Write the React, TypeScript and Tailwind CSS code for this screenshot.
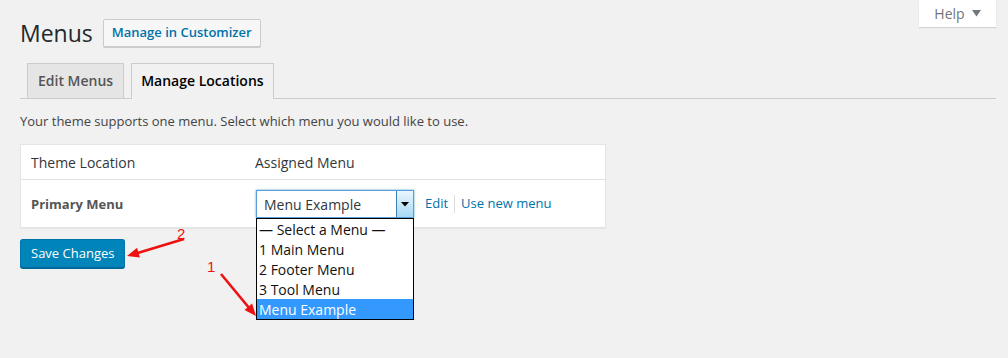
import React from "react";

const font = { fontFamily: '"Open Sans", "Noto Sans", sans-serif' };

const options = ["— Select a Menu —", "1 Main Menu", "2 Footer Menu", "3 Tool Menu", "Menu Example"];

const Annotations: React.FC = () => (
  <svg className="absolute left-0 top-0 pointer-events-none" width="1008" height="358">
    {/* arrow 2 */}
    <line x1="184" y1="239" x2="136" y2="253.5" stroke="#ee1111" strokeWidth="2.6" />
    <polygon points="127,256 137.1,247.8 139.9,257.4" fill="#ee1111" />
    <text x="177" y="239" fill="#ee1111" fontSize="15" fontFamily="Liberation Sans, sans-serif">2</text>
    {/* arrow 1 */}
    <line x1="221" y1="274" x2="250" y2="309" stroke="#ee1111" strokeWidth="2.6" />
    <polygon points="256,316 244.5,310 252.1,303.6" fill="#ee1111" />
    <text x="207" y="272" fill="#ee1111" fontSize="15" fontFamily="Liberation Sans, sans-serif">1</text>
  </svg>
);

export default function App() {
  return (
    <div className="relative w-[1008px] h-[358px] bg-[#f1f1f1] overflow-hidden text-[#444]" style={font}>
      {/* Help tab */}
      <div className="absolute right-[12px] top-0 w-[77px] h-[27px] bg-white shadow-[0_1px_1px_rgba(0,0,0,0.12)] flex items-center justify-center gap-[7px] text-[14px] text-[#72777c]">
        <span>Help</span>
        <svg width="9" height="7" viewBox="0 0 9 7">
          <polygon points="0,0 9,0 4.5,6.5" fill="#72777c" />
        </svg>
      </div>

      <div className="pl-5 pr-3 pt-[19px]">
        {/* Heading */}
        <div className="flex items-center gap-[10px]">
          <h1 className="text-[23px] leading-[28px] text-[#23282d] font-normal">Menus</h1>
          <button className="h-[28px] px-[8px] border border-[#ccc] bg-[#f7f7f7] rounded-[2px] text-[13px] font-semibold text-[#0073aa] shadow-[0_1px_0_#ccc]">
            Manage in Customizer
          </button>
        </div>

        {/* Tabs */}
        <div className="mt-[16px] flex items-end border-b border-[#ccc] pl-[7px]">
          <div className="px-[10px] py-[5px] border border-b-0 border-[#ccc] bg-[#e5e5e5] text-[14px] leading-[24px] font-semibold text-[#555]">
            Edit Menus
          </div>
          <div className="ml-[7px] -mb-px px-[9px] pt-[5px] pb-[6px] border border-b-0 border-[#ccc] bg-[#f1f1f1] text-[14px] leading-[24px] font-semibold text-[#000]">
            Manage Locations
          </div>
        </div>

        <p className="mt-[13px] mb-[13px] text-[13px] leading-[19px] text-[#444]">
          Your theme supports one menu. Select which menu you would like to use.
        </p>

        {/* Locations table */}
        <div className="w-[586px] bg-white border border-[#e5e5e5] shadow-[0_1px_1px_rgba(0,0,0,0.04)]">
          <div className="flex h-[35px] items-center border-b border-[#e1e1e1] text-[14px] text-[#32373c]">
            <div className="w-[224px] pl-[10px]">Theme Location</div>
            <div className="pl-[10px]">Assigned Menu</div>
          </div>
          <div className="flex h-[47px] items-center">
            <div className="w-[224px] pl-[10px] pt-[3px] text-[13px] font-bold text-[#555]">Primary Menu</div>
            <div className="pl-[11px] pt-[1px] flex items-center">
              <div className="relative">
                <div className="w-[158px] h-[28px] flex items-center border border-[#5b9dd9] bg-white shadow-[0_0_2px_rgba(30,140,190,0.8)]">
                  <span className="flex-1 pl-[7px] text-[14px] text-[#32373c]">Menu Example</span>
                  <span className="w-[17px] h-full border-l border-[#3c7fb1] bg-gradient-to-b from-[#eaf6fd] to-[#a7d9f5] flex items-center justify-center">
                    <svg width="8" height="5" viewBox="0 0 8 5">
                      <polygon points="0,0 8,0 4,4.5" fill="#000" />
                    </svg>
                  </span>
                </div>
                {/* Open dropdown list */}
                <div className="absolute left-0 top-[28px] z-10 w-[158px] border border-black bg-white">
                  {options.map((o, i) => (
                    <div
                      key={o}
                      className={
                        i === options.length - 1
                          ? "h-[20px] pl-[2px] pt-[1px] text-[14px] leading-[20px] bg-[#3399ff] text-white"
                          : "h-[20px] pl-[2px] pt-[1px] text-[14px] leading-[20px] text-[#111]"
                      }
                    >
                      {o}
                    </div>
                  ))}
                </div>
              </div>
              <span className="ml-[11px] text-[13px] text-[#0073aa]">Edit</span>
              <span className="mx-[6px] w-px h-[18px] bg-[#ddd]" />
              <span className="text-[13px] text-[#0073aa]">Use new menu</span>
            </div>
          </div>
        </div>

        <button className="mt-[11px] h-[29px] px-[10px] rounded-[3px] bg-[#0085ba] border border-[#0073aa] border-b-[#006799] shadow-[0_1px_0_#006799] text-[13px] text-white">
          Save Changes
        </button>
      </div>

      <Annotations />
    </div>
  );
}
